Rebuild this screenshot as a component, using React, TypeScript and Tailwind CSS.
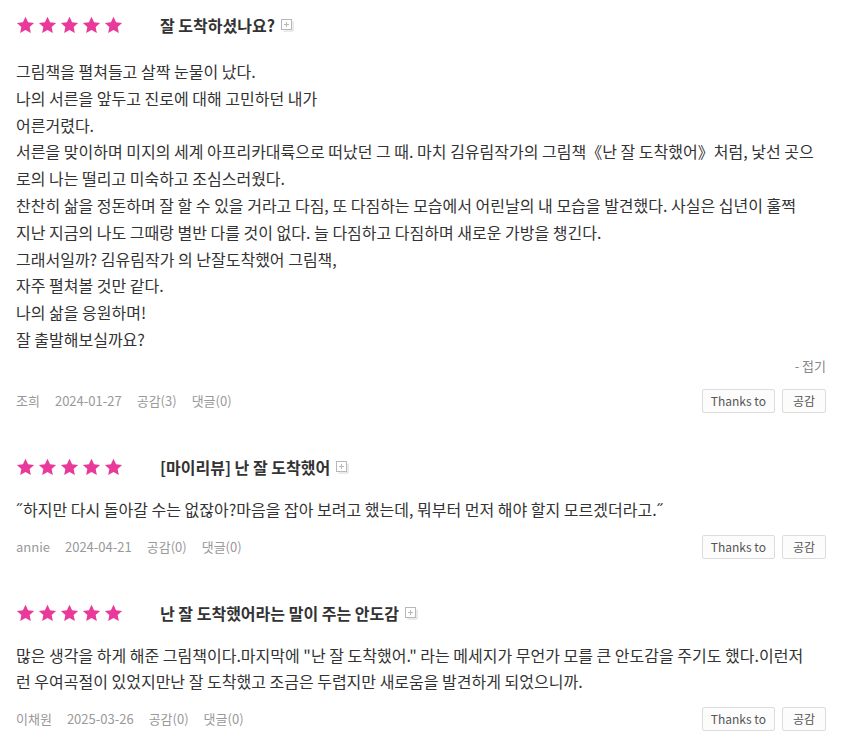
const font = { fontFamily: '"Noto Sans CJK KR", "Noto Sans", sans-serif' };

interface Review {
  title: string;
  lines: string[];
  author: string;
  date: string;
  likes: number;
  comments: number;
  expanded?: boolean;
}

// lines are split where the original page wraps them
const reviews: Review[] = [
  {
    title: "잘 도착하셨나요?",
    lines: [
      "그림책을 펼쳐들고 살짝 눈물이 났다.",
      "나의 서른을 앞두고 진로에 대해 고민하던 내가",
      "어른거렸다.",
      "서른을 맞이하며 미지의 세계 아프리카대륙으로 떠났던 그 때. 마치 김유림작가의 그림책《난 잘 도착했어》처럼, 낯선 곳으",
      "로의 나는 떨리고 미숙하고 조심스러웠다.",
      "찬찬히 삶을 정돈하며 잘 할 수 있을 거라고 다짐, 또 다짐하는 모습에서 어린날의 내 모습을 발견했다. 사실은 십년이 훌쩍",
      "지난 지금의 나도 그때랑 별반 다를 것이 없다. 늘 다짐하고 다짐하며 새로운 가방을 챙긴다.",
      "그래서일까? 김유림작가 의 난잘도착했어 그림책,",
      "자주 펼쳐볼 것만 같다.",
      "나의 삶을 응원하며!",
      "잘 출발해보실까요?",
    ],
    author: "조희",
    date: "2024-01-27",
    likes: 3,
    comments: 0,
    expanded: true,
  },
  {
    title: "[마이리뷰] 난 잘 도착했어",
    lines: [
      "˝하지만 다시 돌아갈 수는 없잖아?마음을 잡아 보려고 했는데, 뭐부터 먼저 해야 할지 모르겠더라고.˝",
    ],
    author: "annie",
    date: "2024-04-21",
    likes: 0,
    comments: 0,
  },
  {
    title: "난 잘 도착했어라는 말이 주는 안도감",
    lines: [
      "많은 생각을 하게 해준 그림책이다.마지막에 \"난 잘 도착했어.\" 라는 메세지가 무언가 모를 큰 안도감을 주기도 했다.이런저",
      "런 우여곡절이 있었지만난 잘 도착했고 조금은 두렵지만 새로움을 발견하게 되었으니까.",
    ],
    author: "이채원",
    date: "2025-03-26",
    likes: 0,
    comments: 0,
  },
];

function Star() {
  return (
    <svg width="19" height="18" viewBox="0 0 24 23" className="shrink-0">
      <path
        d="M12 0.8l3.3 7.1 7.7 0.9-5.7 5.3 1.5 7.7L12 17.9l-6.8 3.9 1.5-7.7L1 8.8l7.7-0.9z"
        fill="#e9399a"
      />
    </svg>
  );
}

function ExpandIcon() {
  return (
    <svg width="13" height="13" viewBox="0 0 13 13" className="shrink-0">
      <rect x="0.5" y="0.5" width="10" height="10" fill="white" stroke="#b8b8b8" />
      <path d="M5.5 3v5M3 5.5h5" stroke="#b8b8b8" />
      <path d="M12 2.5v9.5H2.5" fill="none" stroke="#d6d6d6" />
    </svg>
  );
}

function ReviewItem({ review }: { review: Review }) {
  return (
    <div>
      <div className="flex items-center h-[32px]">
        <div className="w-[144px] flex gap-[3px]">
          {[0, 1, 2, 3, 4].map((i) => (
            <Star key={i} />
          ))}
        </div>
        <span className="text-[16px] font-bold text-[#333]">{review.title}</span>
        <span className="ml-[6px] mt-[1px]">
          <ExpandIcon />
        </span>
      </div>

      <div
        className={`${review.expanded ? "mt-[17px]" : "mt-[13px]"} text-[16px] leading-[26.8px] text-[#333] whitespace-nowrap`}
      >
        {review.lines.map((l, i) => (
          <p key={i}>{l}</p>
        ))}
      </div>

      {review.expanded && (
        <div className="mt-[4px] text-right text-[13px] leading-[18px] text-[#888]">- 접기</div>
      )}

      <div className={`${review.expanded ? "mt-[14px]" : "mt-[12px]"} flex items-center h-[24px]`}>
        <div className="flex-1 flex gap-[15px] text-[13px] text-[#999]">
          <span>{review.author}</span>
          <span>{review.date}</span>
          <span>공감({review.likes})</span>
          <span>댓글({review.comments})</span>
        </div>
        <div className="flex gap-[7px]">
          <button className="h-[24px] px-[8px] border border-[#dcdcdc] rounded-[2px] bg-[#fcfcfc] text-[12px] text-[#555]">
            Thanks to
          </button>
          <button className="h-[24px] px-[10px] border border-[#dcdcdc] rounded-[2px] bg-[#fcfcfc] text-[12px] text-[#555]">
            공감
          </button>
        </div>
      </div>
    </div>
  );
}

export default function App() {
  return (
    <div className="w-[842px] min-h-[754px] bg-white px-[16px] pt-[9px]" style={font}>
      <div className="flex flex-col gap-[38px]">
        {reviews.map((r, i) => (
          <ReviewItem key={i} review={r} />
        ))}
      </div>
    </div>
  );
}
